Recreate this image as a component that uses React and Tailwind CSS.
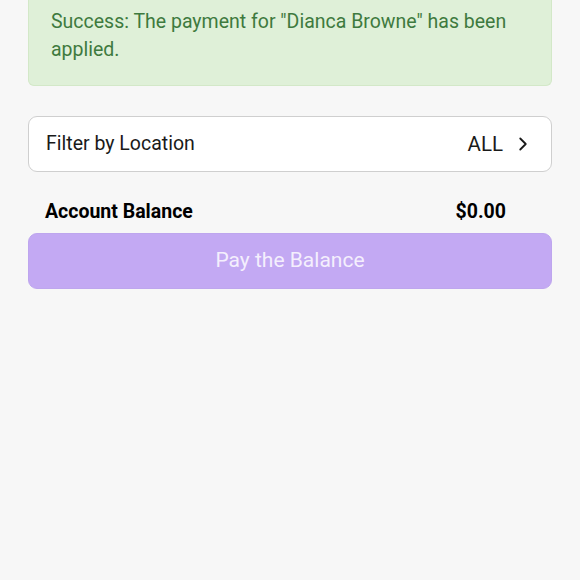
import { ChevronRight } from "lucide-react";

export default function App() {
  return (
    <div
      className="min-h-screen bg-[#f7f7f7] px-[28px]"
      style={{ fontFamily: "Roboto, 'Noto Sans', sans-serif" }}
    >
      {/* SUCCESS ALERT */}
      <div className="rounded-b-[6px] border border-t-0 border-[#d3e8c8] bg-[#dff0d8] px-[22px] pt-[8px] pb-[21px] text-[19.5px] leading-[28px] text-[#3e7a3e]">
        Success: The payment for "Dianca Browne" has been applied.
      </div>

      {/* FILTER */}
      <div className="mt-[30px] flex h-[56px] items-center justify-between rounded-[9px] border border-[#cfcfcf] bg-white pl-[17px] pr-[17px]">
        <span className="text-[19.5px] text-[#1a1a1a]">Filter by Location</span>
        <div className="flex items-center gap-[9px]">
          <span className="text-[20.5px] text-[#1a1a1a]">ALL</span>
          <ChevronRight size={22} strokeWidth={2} className="text-[#1a1a1a]" />
        </div>
      </div>

      {/* BALANCE */}
      <div className="mt-[28px] flex items-center justify-between pl-[17px] pr-[46px] text-[19.5px] font-bold leading-[24px] text-black">
        <span>Account Balance</span>
        <span>$0.00</span>
      </div>

      <button
        disabled
        className="mt-[9px] flex h-[56px] w-full items-center justify-center rounded-[9px] border border-[#bea6ee] bg-[#c3a9f3] text-[21px] text-[#f4effd]"
      >
        Pay the Balance
      </button>
    </div>
  );
}
